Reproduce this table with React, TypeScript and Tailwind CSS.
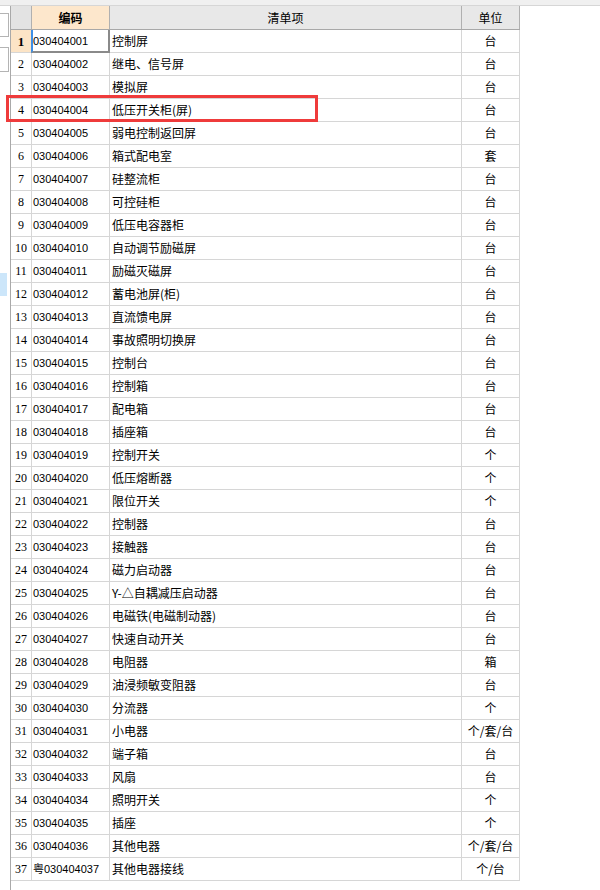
import React from "react";

const rows: [string, string, string][] = [
  ["030404001", "控制屏", "台"],
  ["030404002", "继电、信号屏", "台"],
  ["030404003", "模拟屏", "台"],
  ["030404004", "低压开关柜(屏)", "台"],
  ["030404005", "弱电控制返回屏", "台"],
  ["030404006", "箱式配电室", "套"],
  ["030404007", "硅整流柜", "台"],
  ["030404008", "可控硅柜", "台"],
  ["030404009", "低压电容器柜", "台"],
  ["030404010", "自动调节励磁屏", "台"],
  ["030404011", "励磁灭磁屏", "台"],
  ["030404012", "蓄电池屏(柜)", "台"],
  ["030404013", "直流馈电屏", "台"],
  ["030404014", "事故照明切换屏", "台"],
  ["030404015", "控制台", "台"],
  ["030404016", "控制箱", "台"],
  ["030404017", "配电箱", "台"],
  ["030404018", "插座箱", "台"],
  ["030404019", "控制开关", "个"],
  ["030404020", "低压熔断器", "个"],
  ["030404021", "限位开关", "个"],
  ["030404022", "控制器", "台"],
  ["030404023", "接触器", "台"],
  ["030404024", "磁力启动器", "台"],
  ["030404025", "Y-△自耦减压启动器", "台"],
  ["030404026", "电磁铁(电磁制动器)", "台"],
  ["030404027", "快速自动开关", "台"],
  ["030404028", "电阻器", "箱"],
  ["030404029", "油浸频敏变阻器", "台"],
  ["030404030", "分流器", "个"],
  ["030404031", "小电器", "个/套/台"],
  ["030404032", "端子箱", "台"],
  ["030404033", "风扇", "台"],
  ["030404034", "照明开关", "个"],
  ["030404035", "插座", "个"],
  ["030404036", "其他电器", "个/套/台"],
  ["粤030404037", "其他电器接线", "个/台"],
];

const cjk = { fontFamily: '"Noto Sans CJK SC", sans-serif' };
const code = { fontFamily: '"Liberation Sans", "Noto Sans CJK SC", sans-serif' };
const num = { fontFamily: '"Liberation Serif", serif' };

export default function App() {
  return (
    <div className="relative w-[600px] h-[890px] bg-white overflow-hidden text-black">
      <div className="h-[6px] bg-[#f0f0f0] border-b border-[#d6d6d6]" />
      <div className="flex h-[884px]">
        {/* left panel */}
        <div className="w-[10px] flex flex-col">
          <div className="mt-[7px] h-[24px] w-[9px] border border-l-0 border-[#b4b4b4]" />
          <div className="mt-[10px] h-[25px] w-[9px] border border-l-0 border-[#b4b4b4]" />
          <div className="mt-[201px] h-[23px] w-[7px] bg-[#cce6fa]" />
        </div>
        {/* table */}
        <div className="w-[510px] border-l border-[#a9a9a9] flex flex-col">
          {/* header */}
          <div className="flex h-[24px] border-b border-[#a8a8a8]">
            <div className="w-[21px] bg-[#e3e3e3] border-r border-[#b0b0b0]" />
            <div
              className="w-[78px] bg-[#fde7cc] border-r border-[#b0b0b0] flex items-center justify-center text-[12px] font-bold leading-none"
              style={cjk}
            >
              编码
            </div>
            <div
              className="w-[352px] bg-[#e8e8e8] border-r border-[#b0b0b0] flex items-center justify-center text-[12px] leading-none"
              style={cjk}
            >
              清单项
            </div>
            <div
              className="w-[58px] bg-[#e8e8e8] border-r border-[#b0b0b0] flex items-center justify-center text-[12px] leading-none"
              style={cjk}
            >
              单位
            </div>
          </div>
          {rows.map(([c, n, u], i) => (
            <div key={i} className="flex h-[23px] border-b border-[#d6d6d6]">
              <div
                className={
                  i === 0
                    ? "w-[21px] bg-[#fce4c6] border-r border-[#d6d6d6] flex items-center justify-center text-[13px] font-bold leading-none"
                    : "w-[21px] border-r border-[#d6d6d6] flex items-center justify-center text-[12px] leading-none"
                }
                style={num}
              >
                {i + 1}
              </div>
              <div
                className="relative w-[78px] border-r border-[#d6d6d6] flex items-center pl-[1px] text-[11px] leading-none whitespace-nowrap"
                style={code}
              >
                {c}
                {i === 0 && (
                  <div className="absolute left-[-1px] top-0 w-[79px] h-[23px] border-l-2 border-l-[#3d8fe6] border-r-2 border-b-2 border-r-[#8a8a8a] border-b-[#8a8a8a]" />
                )}
              </div>
              <div
                className="w-[352px] border-r border-[#d6d6d6] flex items-center pl-[2px] text-[12px] leading-none whitespace-nowrap"
                style={cjk}
              >
                {n}
              </div>
              <div
                className="w-[58px] border-r border-[#d6d6d6] flex items-center justify-center text-[12px] leading-none whitespace-nowrap"
                style={cjk}
              >
                {u}
              </div>
            </div>
          ))}
        </div>
      </div>
      {/* red highlight box */}
      <div className="absolute left-[6px] top-[95px] w-[312px] h-[27px] border-[3px] border-[#ef3b3b]" />
    </div>
  );
}
